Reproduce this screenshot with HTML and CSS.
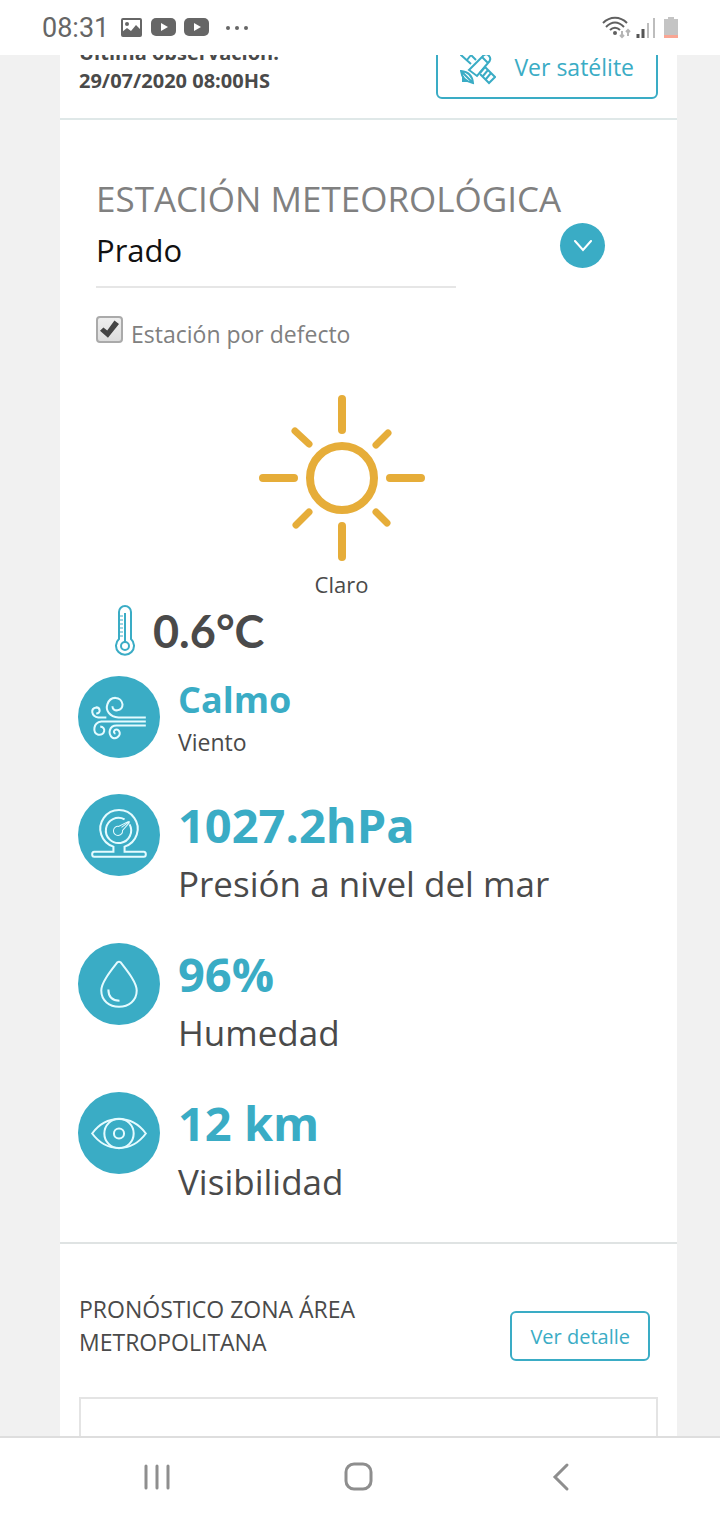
FILE: index.html
```
<!DOCTYPE html>
<html lang="es">
<head>
    <meta charset="UTF-8">
    <meta name="viewport" content="width=device-width, initial-scale=1">
    <title>Estación meteorológica</title>
    <link rel="stylesheet" href="styles.css">
</head>
<body>

    <div class="barra-estado">
        <span class="hora">08:31</span>
        <div class="avisos">
            <svg width="22" height="20" viewBox="0 0 22 20">
                <rect x="1" y="1" width="19" height="17" rx="1" fill="none" stroke="#666" stroke-width="2"/>
                <circle cx="6" cy="6" r="2" fill="#666"/>
                <path d="M1 18v-4l5-4 4 3 5-6 5 5v6z" fill="#666"/>
            </svg>
            <svg width="25" height="19" viewBox="0 0 25 19">
                <rect width="25" height="18" rx="5" fill="#666"/>
                <path d="M10 5l7 4-7 4z" fill="#fff"/>
            </svg>
            <svg width="25" height="19" viewBox="0 0 25 19">
                <rect width="25" height="18" rx="5" fill="#666"/>
                <path d="M10 5l7 4-7 4z" fill="#fff"/>
            </svg>
        </div>
        <svg width="24" height="6" viewBox="0 0 24 6" fill="#666">
            <circle cx="3" cy="3" r="2"/>
            <circle cx="12" cy="3" r="2"/>
            <circle cx="21" cy="3" r="2"/>
        </svg>
        <svg class="senales" width="78" height="24" viewBox="0 0 78 24" fill="none">
            <path d="M3 7C10 0 20 0 27 7M6 11C12 5 18 5 24 11M10 14C13 11 17 11 20 14" stroke="#606060" stroke-width="2"/>
            <circle cx="15" cy="17" r="2" fill="#606060"/>
            <path d="M22 15v6M20 19l2 2 2-2M28 20v-6M26 16l2-2 2 2" stroke="#b5b5b5" stroke-width="2"/>
            <path d="M38 18v4M43 13v9" stroke="#555" stroke-width="3"/>
            <path d="M48 7v15M54 2v20" stroke="#bdbdbd" stroke-width="2"/>
            <path d="M68 1h6v2h4v19H64V3h4z" fill="#c4c4c4"/>
            <path d="M64 19h14v3H64z" fill="#f9a593"/>
        </svg>
    </div>

    <main class="pagina">
        <div class="tarjeta">

            <div class="observacion">
                <p>Última observación:<br>29/07/2020 08:00HS</p>
                <button class="boton boton-satelite">
                    <svg width="36" height="38" viewBox="0 0 36 38" fill="none" stroke="#3aacc5" stroke-width="2">
                        <path d="M9 22L22 9Q26 4 29 8Q32 11 28 15L17 28zM22 9L28 15"/>
                        <path d="M11 16L1 7L6 2L16 12M7 12L11 7"/>
                        <path d="M20 25L25 19L35 29L29 35L20 26M23 28L28 22M26 31L31 25"/>
                        <path d="M1 23Q2 33 13 35Q12 24 1 23zM1 23L13 35M3 28V33H8"/>
                    </svg>
                    Ver satélite
                </button>
            </div>

            <section class="estacion">
                <div class="selector">
                    <label class="titulo" for="estacion">ESTACIÓN METEOROLÓGICA</label>
                    <div class="fila-selector">
                        <select id="estacion" name="estacion">
                            <option>Prado</option>
                        </select>
                        <button class="desplegar" aria-label="Elegir estación">
                            <svg width="20" height="12" viewBox="0 0 20 12">
                                <path d="M2 1l8 9 8-9" fill="none" stroke="#fff" stroke-width="2" stroke-linecap="round"/>
                            </svg>
                        </button>
                    </div>
                    <div class="defecto">
                        <input type="checkbox" id="defecto" checked>
                        <label for="defecto">Estación por defecto</label>
                    </div>
                </div>

                <div class="cielo">
                    <svg width="168" height="168" viewBox="0 0 168 168" fill="none" stroke="#e6ad39" stroke-width="8" stroke-linecap="round">
                        <circle cx="84" cy="84" r="32"/>
                        <path d="M84 5v31M84 132v31M5 84h31M132 84h31"/>
                        <path d="M37 37l14 13M130 39l-12 12M38 131l13-13M118 118l11 11" stroke-width="7"/>
                    </svg>
                    <p>Claro</p>
                </div>

                <div class="temperatura">
                    <svg width="20" height="52" viewBox="0 0 20 52" fill="none" stroke="#3aacc5" stroke-width="2">
                        <path d="M4 34V7a6 6 0 0 1 12 0v27a9 9 0 1 1-12 0z"/>
                        <path d="M10 8v29"/>
                        <path d="M4 11h4M4 15h4M4 19h4M4 23h4M4 27h4M4 31h4" stroke-width="1"/>
                        <circle cx="10" cy="41" r="4"/>
                    </svg>
                    <span>0.6°C</span>
                </div>

                <div class="datos">
                    <div class="dato dato-viento">
                        <svg class="icono" viewBox="0 0 81 81">
                            <circle cx="40.5" cy="40.5" r="40.5"/>
                            <path d="M67 41H40C31 40 27 34 29 28C32 19 43 20 44 28C44 35 34 36 34 30"/>
                            <path d="M28 41H20C13 40 12 32 18 31C22 31 23 37 18 37"/>
                            <path d="M67 45H23C15 46 14 56 20 58C27 59 28 50 22 50"/>
                            <path d="M67 49H38C31 49 29 57 34 61C40 63 44 56 39 53C36 52 34 56 37 57"/>
                        </svg>
                        <div>
                            <strong>Calmo</strong>
                            <p>Viento</p>
                        </div>
                    </div>
                    <div class="dato">
                        <svg class="icono" viewBox="0 0 81 81">
                            <circle cx="40.5" cy="40.5" r="40.5"/>
                            <path d="M35 57v-5a18.5 18.5 0 1 1 11 0v5h19q2 0 2 2.500t-2 2.500H16q-2 0-2-2.500t2-2.500z"/>
                            <path d="M46 25a12.500 12.500 0 1 0 5 5"/>
                            <path d="M50 27L40 32A4.500 4.500 0 1 0 44 36L51 28M43 33L51 27" stroke-width="1"/>
                        </svg>
                        <div>
                            <strong>1027.2hPa</strong>
                            <p>Presión a nivel del mar</p>
                        </div>
                    </div>
                    <div class="dato">
                        <svg class="icono" viewBox="0 0 81 81">
                            <circle cx="40.5" cy="40.5" r="40.5"/>
                            <path d="M39 19Q40.5 18 42 19C49 28 58 39 58 47C58 57 50 63 40.500 63S23 57 23 47C23 39 32 28 39 19z"/>
                            <path d="M30 46C30 53 34 57 41 57"/>
                        </svg>
                        <div>
                            <strong>96%</strong>
                            <p>Humedad</p>
                        </div>
                    </div>
                    <div class="dato">
                        <svg class="icono" viewBox="0 0 81 81">
                            <circle cx="40.5" cy="40.5" r="40.5"/>
                            <path d="M14 41C28 22 53 22 67 41C53 60 28 60 14 41z"/>
                            <path d="M26 41a14.500 14.500 0 1 0 29 0a14.500 14.500 0 1 0-29 0M35.500 41a5 5 0 1 0 10 0a5 5 0 1 0-10 0"/>
                        </svg>
                        <div>
                            <strong>12 km</strong>
                            <p>Visibilidad</p>
                        </div>
                    </div>
                </div>
            </section>

            <section class="pronostico">
                <div class="pronostico-cabecera">
                    <h2>PRONÓSTICO ZONA ÁREA METROPOLITANA</h2>
                    <button class="boton">Ver detalle</button>
                </div>
                <div class="recuadro"></div>
            </section>

        </div>
    </main>

    <nav class="navegacion">
        <button aria-label="Recientes">
            <svg width="32" height="32" viewBox="0 0 32 32">
                <path d="M5 5v22M16 5v22M27 5v22"/>
            </svg>
        </button>
        <button aria-label="Inicio">
            <svg width="32" height="32" viewBox="0 0 32 32">
                <rect x="3" y="3" width="25" height="25" rx="8"/>
            </svg>
        </button>
        <button aria-label="Atrás">
            <svg width="32" height="32" viewBox="0 0 32 32">
                <path d="M22 4L10 16l12 12"/>
            </svg>
        </button>
    </nav>

</body>
</html>
```
FILE: styles.css
```
* {
    box-sizing: border-box;
}
body {
    margin: 0;
    height: 100vh;
    display: flex;
    flex-direction: column;
    font-family: "Open Sans", sans-serif;
    color: #4a4a4a;
    background-color: #f1f1f1;
}
p, h2 {
    margin: 0;
}
button {
    font-family: inherit;
    cursor: pointer;
}
svg {
    display: block;
    flex-shrink: 0;
}

/* barra de estado */
.barra-estado {
    flex-shrink: 0;
    display: flex;
    align-items: center;
    height: 55px;
    padding: 0 42px;
    background-color: #fff;
}
.hora {
    font-family: Roboto, sans-serif;
    font-size: 27px;
    color: #666;
}
.avisos {
    display: flex;
    gap: 8px;
    margin: 0 16px 0 12px;
}
.senales {
    margin-left: auto;
}

/* contenido */
.pagina {
    flex: 1;
    min-height: 0;
    overflow: hidden;
    padding: 0 43px 0 60px;
}
.tarjeta {
    margin-top: -20px;
    background-color: #fff;
}
.boton {
    height: 50px;
    padding: 0 18px;
    border: 2px solid #3aacc5;
    border-radius: 6px;
    background-color: #fff;
    color: #3aacc5;
    font-size: 20px;
    white-space: nowrap;
}
.observacion {
    display: flex;
    justify-content: space-between;
    align-items: flex-end;
    padding: 0 19px 19px;
    border-bottom: 2px solid #dfe8e8;
}
.observacion p {
    padding-bottom: 4px;
    font-size: 20px;
    font-weight: bold;
    line-height: 28px;
}
.boton-satelite {
    display: flex;
    align-items: center;
    gap: 18px;
    height: 64px;
    padding: 0 22px;
    font-size: 23px;
}

/* estacion */
.estacion {
    padding: 54px 72px 34px 18px;
    border-bottom: 2px solid #dfe3e3;
}
.selector {
    padding-left: 18px;
}
.titulo {
    display: block;
    font-size: 35px;
    line-height: 49px;
    color: #808080;
    white-space: nowrap;
}
.fila-selector {
    display: flex;
    justify-content: space-between;
    align-items: flex-start;
}
.fila-selector select {
    appearance: none;
    width: 360px;
    height: 65px;
    padding: 0 0 10px;
    border: none;
    border-bottom: 2px solid #e6e6e6;
    border-radius: 0;
    background-color: #fff;
    color: #111;
    font-family: inherit;
    font-size: 31px;
}
.desplegar {
    display: flex;
    align-items: center;
    justify-content: center;
    width: 45px;
    height: 45px;
    padding: 0;
    border: none;
    border-radius: 50%;
    background-color: #3aacc5;
}
.defecto {
    display: flex;
    gap: 8px;
    margin-top: 28px;
    font-size: 23px;
    line-height: 36px;
    color: #808080;
}
.defecto input {
    appearance: none;
    width: 27px;
    height: 27px;
    margin: 0;
    border: 2px solid #aaa;
    border-radius: 4px;
    background: linear-gradient(#eee, #ddd);
}
.defecto input:checked::before {
    content: "";
    display: block;
    width: 19px;
    height: 18px;
    margin: 2px;
    background-color: #444;
    clip-path: polygon(0 60%, 18% 42%, 38% 58%, 76% 3%, 100% 22%, 42% 98%);
}

.cielo {
    display: flex;
    flex-direction: column;
    align-items: center;
    margin-top: 42px;
    font-size: 22px;
    line-height: 44px;
}
.temperatura {
    display: flex;
    align-items: center;
    gap: 18px;
    height: 50px;
    padding-left: 37px;
    font-family: Lato, sans-serif;
    font-size: 45px;
    font-weight: bold;
}

/* datos */
.datos {
    display: flex;
    flex-direction: column;
    gap: 33px;
    margin-top: 20px;
}
.dato {
    display: flex;
    gap: 18px;
}
.dato strong {
    display: block;
    font-size: 47px;
    line-height: 63px;
    color: #3aacc5;
}
.dato p {
    font-size: 35px;
    line-height: 53px;
}
.dato-viento strong {
    font-size: 36px;
    line-height: 47px;
}
.dato-viento p {
    font-size: 23px;
    line-height: 38px;
}
.icono {
    width: 82px;
    height: 82px;
    fill: none;
    stroke: #e4fbff;
    stroke-width: 2;
}
.icono circle {
    fill: #3aacc5;
    stroke: none;
}

/* pronostico */
.pronostico {
    padding: 49px 19px 0;
}
.pronostico-cabecera {
    display: flex;
    justify-content: space-between;
    align-items: flex-end;
    gap: 24px;
    padding-right: 8px;
}
.pronostico h2 {
    max-width: 320px;
    padding-bottom: 2px;
    font-size: 23px;
    font-weight: normal;
    line-height: 33px;
}
.recuadro {
    height: 200px;
    margin-top: 36px;
    border: 2px solid #e4e4e4;
}

/* navegacion */
.navegacion {
    flex-shrink: 0;
    display: flex;
    justify-content: space-around;
    align-items: center;
    height: 84px;
    padding: 0 58px 4px 56px;
    border-top: 2px solid #dedede;
    background-color: #fff;
}
.navegacion button {
    padding: 0;
    border: none;
    background: none;
}
.navegacion svg {
    fill: none;
    stroke: #8e8e8e;
    stroke-width: 3;
    stroke-linecap: round;
}
```
